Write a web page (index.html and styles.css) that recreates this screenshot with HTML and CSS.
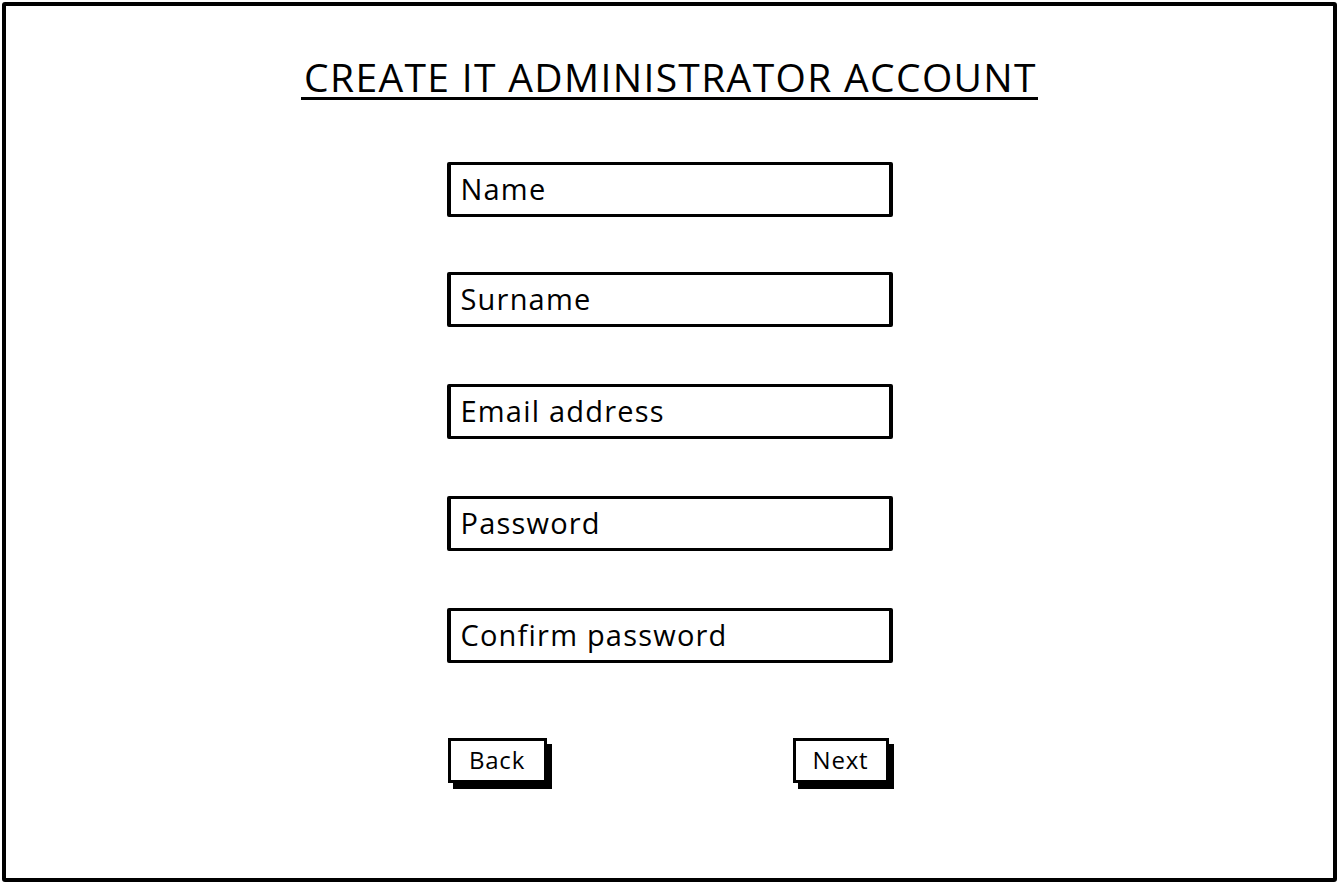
FILE: index.html
```html
<!DOCTYPE html>
<html lang="en">
<head>
<meta charset="utf-8">
<title>Create IT Administrator Account</title>
<link rel="stylesheet" href="styles.css">
</head>
<body>
<div class="frame">
  <h1 class="title"><span class="title-text">CREATE IT ADMINISTRATOR ACCOUNT</span></h1>
  <div class="form">
    <div class="field">Name</div>
    <div class="field">Surname</div>
    <div class="field">Email address</div>
    <div class="field">Password</div>
    <div class="field">Confirm password</div>
    <div class="actions">
      <div class="btn">Back</div>
      <div class="btn">Next</div>
    </div>
  </div>
</div>
</body>
</html>
```
FILE: styles.css
```css
html, body {
  margin: 0;
  padding: 0;
  background: #fff;
}
body {
  width: 1340px;
  height: 884px;
  font-family: "Open Sans", "Liberation Sans", sans-serif;
  color: #000;
}
.frame {
  box-sizing: border-box;
  margin: 2px 3px 2px 2px;
  height: 880px;
  border: 4px solid #000;
  border-radius: 3px;
  display: flex;
  flex-direction: column;
  align-items: center;
}
.title {
  margin: 51px 0 0 0;
  font-weight: 400;
  font-size: 39px;
  line-height: 40px;
  letter-spacing: 1.35px;
}
.title-text {
  display: inline-block;
  border-bottom: 3px solid #000;
  padding: 0 1px 0 3px;
  line-height: 40px;
}
.form {
  margin-top: 62px;
  width: 446px;
  display: flex;
  flex-direction: column;
  gap: 57px;
}
.field {
  box-sizing: border-box;
  height: 55px;
  border: 3px solid #000;
  border-left-width: 4px;
  border-right-width: 4px;
  border-radius: 2px;
  padding: 0 10px 3px 10px;
  display: flex;
  align-items: center;
  font-size: 29px;
  letter-spacing: 1.2px;
}
.field:first-child {
  margin-bottom: -2px;
}
.actions {
  margin-top: 18px;
  display: flex;
  justify-content: space-between;
  padding: 0 4px 0 1px;
}
.btn {
  box-sizing: border-box;
  width: 99px;
  height: 45px;
  border: 3px solid #000;
  box-shadow: 5px 6px 0 #000;
  display: flex;
  align-items: center;
  justify-content: center;
  font-size: 24px;
  letter-spacing: 0.8px;
  padding-bottom: 2px;
  background: #fff;
}
.btn:last-child {
  width: 96px;
}
```
